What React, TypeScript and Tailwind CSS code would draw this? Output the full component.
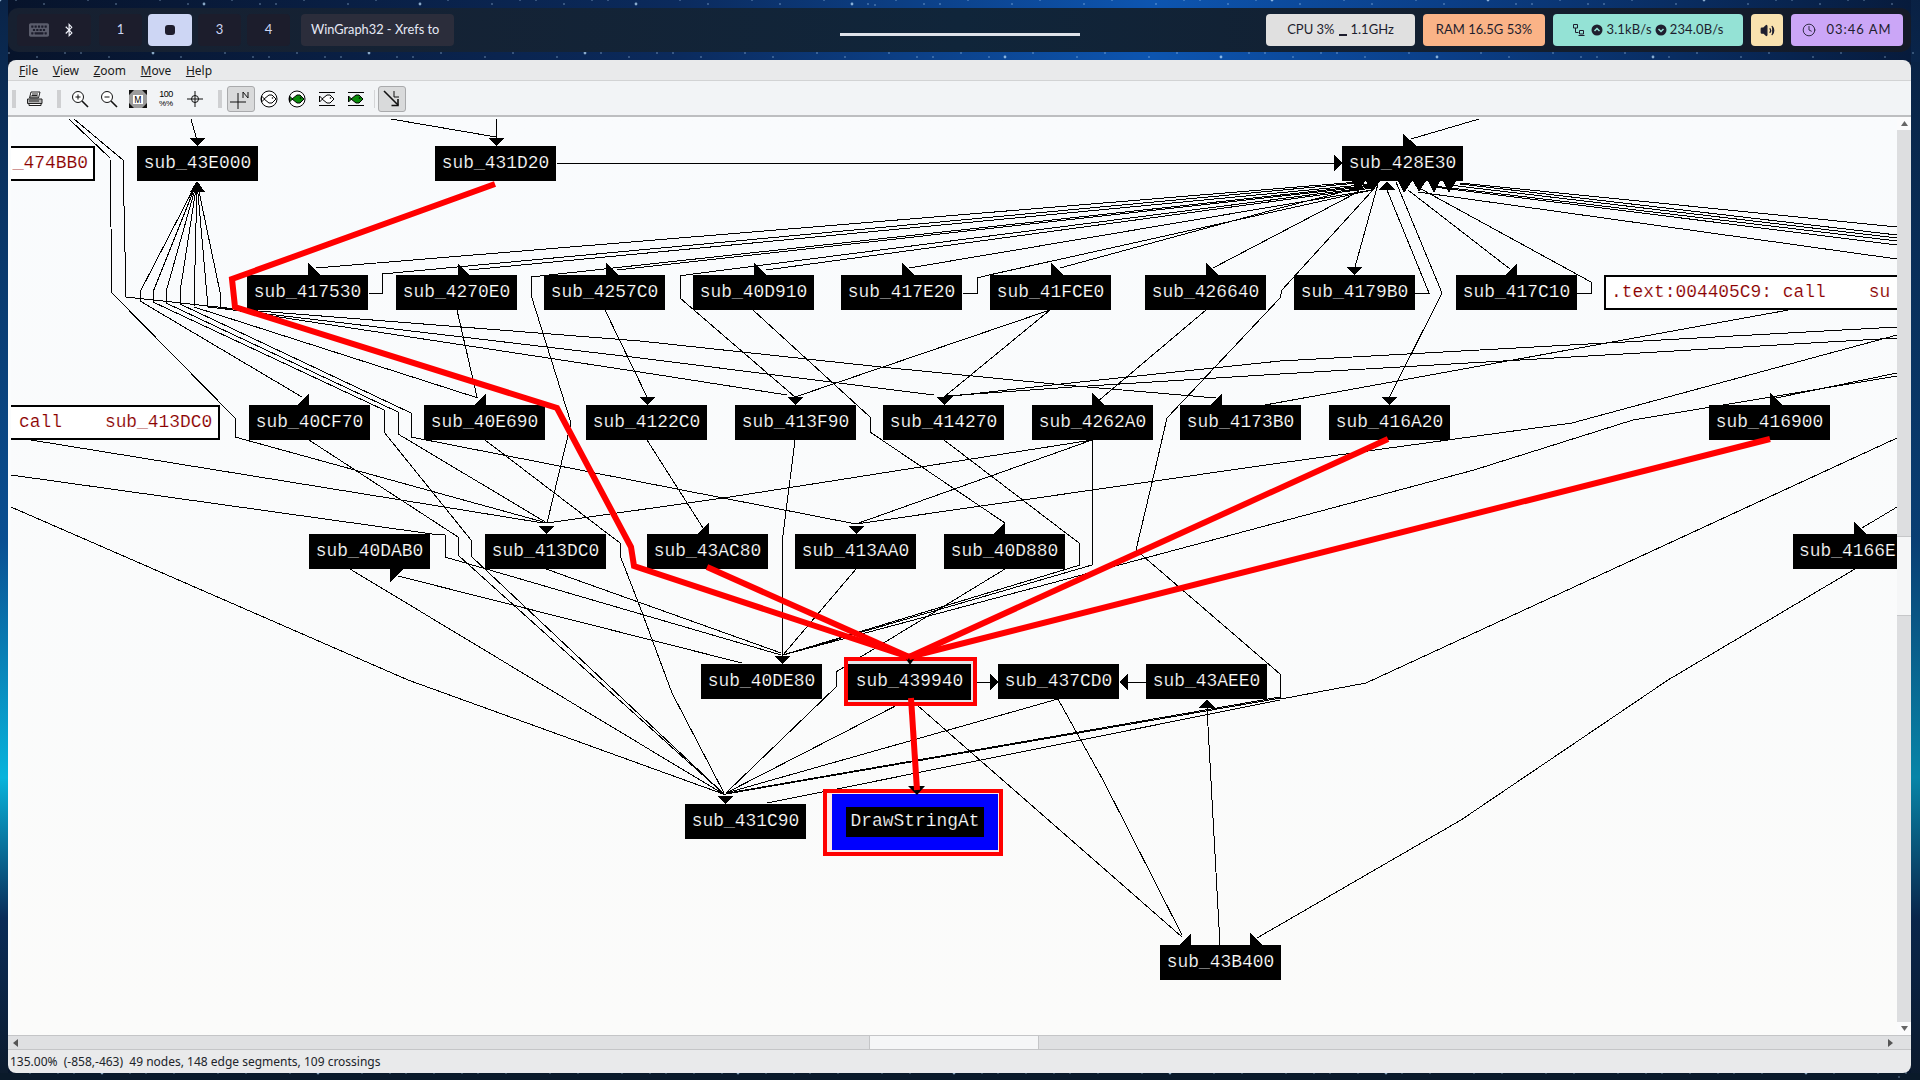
import React from "react";
import { FaBluetoothB, FaKeyboard } from "react-icons/fa";
import { Clock, Volume2 } from "lucide-react";

// Screen coordinates of the graph's top-left corner. Everything below is in screen px.
const OX = 11;
const OY = 119;

const nodes: [string, number, number][] = [
  ["sub_43E000", 137, 146], ["sub_431D20", 435, 146], ["sub_428E30", 1342, 146],
  ["sub_417530", 247, 275], ["sub_4270E0", 396, 275], ["sub_4257C0", 544, 275], ["sub_40D910", 693, 275],
  ["sub_417E20", 841, 275], ["sub_41FCE0", 990, 275], ["sub_426640", 1145, 275], ["sub_4179B0", 1294, 275],
  ["sub_417C10", 1456, 275],
  ["sub_40CF70", 249, 405], ["sub_40E690", 424, 405], ["sub_4122C0", 586, 405], ["sub_413F90", 735, 405],
  ["sub_414270", 883, 405], ["sub_4262A0", 1032, 405], ["sub_4173B0", 1180, 405], ["sub_416A20", 1329, 405],
  ["sub_416900", 1709, 405],
  ["sub_40DAB0", 309, 534], ["sub_413DC0", 485, 534], ["sub_43AC80", 647, 534], ["sub_413AA0", 795, 534],
  ["sub_40D880", 944, 534],
  ["sub_40DE80", 701, 664], ["sub_437CD0", 998, 664], ["sub_43AEE0", 1146, 664],
  ["sub_431C90", 685, 804], ["sub_43B400", 1160, 945],
];

const edges: string[] = [
  // top row
  "191,119 197,140",
  "496,119 496,140",
  "391,119 496,137",
  "557,163 1336,163",
  "1411,139 1479,119",
  // long routed edges on the left
  "69,119 110,158 111,227 112,293 235,418 235,437 547,523",
  "74,119 123,160 126,297 245,310 640,341 881,367 1064,385 1216,398",
  // fan out of sub_43E000
  "197,182 140,292 140,301 302,397",
  "197,182 153,292 153,302 384,410 384,432 471,540 472,557 725,795",
  "197,182 166,292 166,303 398,412 398,434 547,523",
  "197,182 180,292 180,304 411,413 411,437 856,524",
  "197,182 194,307 478,398",
  "197,182 208,307 640,358 934,395",
  "197,182 220,292 220,308 640,372 787,395",
  // bundle into sub_428E30 from the left
  "316,268 1358,182",
  "369,293 382,293 382,274 1358,183",
  "469,270 1372,184",
  "531,295 531,277 1372,185",
  "617,270 1372,186",
  "680,276 693,274 1372,187",
  "766,270 1372,188",
  "909,268 1372,190",
  "963,293 977,293 977,278 989,275 1372,190",
  "1060,268 1280,208 1358,188",
  "1213,268 1358,192",
  "1372,191 1282,290 1280,298 1167,418 1155,470 1136,550 1280,674 1281,698 726,794",
  // bundle out of sub_428E30 to the right
  "1460,183 1897,227",
  "1460,184 1897,235",
  "1449,185 1897,238",
  "1434,186 1897,241",
  "1434,187 1897,245",
  "1418,192 1897,259",
  // around sub_428E30
  "1378,184 1355,267",
  "1415,293 1429,293 1387,190",
  "1396,182 1442,293 1389,398",
  "1408,190 1510,269",
  "1421,189 1591,282 1591,293 1577,293",
  // row 2 downwards
  "457,310 477,397",
  "531,295 571,423 547,523",
  "605,310 647,397",
  "680,276 680,298 795,397",
  "753,310 870,417 870,432 1005,523",
  "1050,310 795,397",
  "1050,310 944,397",
  "1206,310 1097,402",
  // from the right edge towards row 3
  "1280,361 1052,385 944,397",
  "1280,374 1072,387 946,396",
  "1280,361 1897,327",
  "1280,374 1897,338",
  "1265,405 1794,309",
  "856,524 1280,463 1572,423 1897,335",
  "783,655 1474,470 1633,420 1897,376",
  "1776,398 1897,373",
  // row 3 downwards
  "309,440 458,537 459,556 725,795",
  "485,440 620,543 621,558 640,607 672,693 724,793",
  "647,440 703,528",
  "795,440 782,543 782,657",
  "944,440 1079,543 1080,565 783,655",
  "1092,440 1092,565 783,655",
  "1092,440 856,524",
  "1092,440 730,497 547,523",
  "31,440 543,523",
  "11,475 432,534 445,535 445,557 781,655",
  "11,507 408,680 726,795",
  // row 4 downwards
  "350,569 725,795",
  "398,576 742,663",
  "546,569 781,653",
  "856,569 783,655",
  "1005,569 836,672 836,687 726,793",
  // bottom of the graph
  "909,699 726,793",
  "917,705 1182,937",
  "1058,699 1103,780 1182,935",
  "1058,699 726,793",
  "1280,697 728,793",
  "767,803 1280,700",
  "1281,699 1366,683 1897,438",
  "1207,708 1220,945",
  "1855,569 1668,680 1461,820 1257,938",
  "1862,528 1897,507",
  "971,682 990,682",
  "1146,682 1128,682",
];

const arrows: string[] = [
  // down
  "189,138 206,138 197,146", "488,138 505,138 496,146", "1346,267 1363,267 1354,275",
  "639,397 656,397 647,405", "787,397 804,397 795,405", "936,397 953,397 944,405", "1381,397 1398,397 1389,405",
  "538,526 555,526 546,534", "848,526 865,526 856,534", "774,656 790,656 782,664", "717,796 734,796 725,804",
  // up
  "197,181 190,192 205,192", "1387,181 1379,190 1395,190", "1207,699 1199,708 1215,708",
  // sideways
  "1334,155 1334,172 1342,163", "990,673 990,691 998,682", "1128,673 1128,691 1119,682",
  // the skewed heads that stick out of a node
  "1403,134 1403,146 1417,146", "308,263 308,275 320,275", "458,263 458,275 469,275", "606,263 606,275 618,275",
  "754,263 754,275 767,275", "902,263 902,275 914,275", "1051,263 1051,275 1063,275", "1206,263 1206,275 1219,275",
  "1517,263 1517,275 1505,275", "309,393 309,405 298,405", "486,393 486,405 474,405", "1092,393 1092,405 1104,405",
  "1222,393 1222,405 1210,405", "1770,393 1770,405 1782,405", "709,522 709,534 697,534", "1005,522 1005,534 994,534",
  "1854,522 1854,534 1866,534", "1191,933 1191,945 1179,945", "1250,933 1250,945 1262,945", "390,569 390,582 403,569",
  // the row under sub_428E30
  "1352,181 1365,181 1358,193", "1366,181 1380,181 1372,192", "1398,181 1412,181 1404,193",
  "1413,181 1426,181 1419,192", "1428,181 1440,181 1434,193", "1443,181 1456,181 1449,193",
];

const redEdges: string[] = [
  "495,184 232,279 235,307 557,408 631,547 634,566 909,657",
  "707,567 909,657",
  "1388,439 909,657",
  "1770,439 909,657",
  "911,698 917,790",
];

const stars = Array.from({ length: 260 }, (_, i) => ({
  x: (i * 397) % 1920,
  y: i % 4 === 0 ? (i * 31) % 8 : i % 4 === 1 ? 52 + (i * 13) % 8 : i % 4 === 2 ? 1073 + (i * 7) % 7 : (i * 211) % 1080,
  r: i % 9 === 0 ? 1.4 : 0.7,
}));

const pos = (x: number, y: number) => ({ left: x - OX, top: y - OY });

const nodeText =
  "font-['Liberation_Mono',monospace] text-[17.9px] leading-none text-white [-webkit-text-stroke:0.2px_#000]";
const commentText =
  "font-['Liberation_Mono',monospace] text-[17.9px] leading-none text-[#8b0000] [-webkit-text-stroke:0.15px_#fff]";

function GraphNode({ label, x, y }: { label: string; x: number; y: number }) {
  return (
    <div style={pos(x, y)} className={`absolute flex h-[35px] w-[121px] items-center justify-center bg-black ${nodeText}`}>
      {label}
    </div>
  );
}

function Grip({ className = "" }: { className?: string }) {
  return <div className={`h-[18px] w-[4px] bg-[radial-gradient(#cfd0d2_1px,transparent_1px)] bg-[length:2px_3px] ${className}`} />;
}

function Tool({ children, pressed, className = "" }: { children: React.ReactNode; pressed?: boolean; className?: string }) {
  return (
    <div
      className={`flex h-[26px] w-[28px] shrink-0 items-center justify-center rounded-[3px] border ${
        pressed ? "border-[#a9aaac] bg-[#d9dadb]" : "border-transparent"
      } ${className}`}
    >
      {children}
    </div>
  );
}

function Zoomer({ plus }: { plus?: boolean }) {
  return (
    <svg width="20" height="20" viewBox="0 0 20 20" fill="none" stroke="#111" strokeWidth="1">
      <circle cx="8" cy="8" r="5.5" fill="#fff" />
      <path d="M5.5 8h5" />
      {plus && <path d="M8 5.5v5" />}
      <path d="M12 12l6 6" strokeWidth="1.6" />
    </svg>
  );
}

function Fish({ green, ring }: { green?: boolean; ring?: boolean }) {
  const fill = green ? "#0a8a0a" : "#fff";
  return (
    <svg width="18" height="18" viewBox="0 0 18 18" fill="none" stroke="#000" strokeWidth="1">
      {ring ? <circle cx="9" cy="9" r="8" fill="#fff" /> : <path d="M1 2.5h16M1 15.5h16" />}
      <path d="M1.5 6 L4.5 9 L1.5 12 Z" fill={fill} />
      <path d="M4 9 L9 5 H12 L16 9 L12 13 H9 Z" fill={fill} />
      <circle cx="12.5" cy="8" r="0.8" fill="#000" stroke="none" />
    </svg>
  );
}

function Tick({ children }: { children: React.ReactNode }) {
  return <div className="flex h-[13px] w-[14px] shrink-0 items-center justify-center bg-[#fbfbfc]">{children}</div>;
}

function Chip({ children, className = "" }: { children: React.ReactNode; className?: string }) {
  return (
    <div className={`flex h-[32px] items-center justify-center rounded-[4px] font-['Lato',sans-serif] text-[13px] text-[#1e1e2e] ${className}`}>
      {children}
    </div>
  );
}

function Rate({ up }: { up?: boolean }) {
  return (
    <svg width="12" height="12" viewBox="0 0 12 12" className="shrink-0">
      <circle cx="6" cy="6" r="5.5" fill="#1e1e2e" />
      <path d={up ? "M3.5 7L6 4.5 8.5 7" : "M3.5 5L6 7.5 8.5 5"} fill="none" stroke="#94e2d5" strokeWidth="1.5" />
    </svg>
  );
}

export default function App() {
  return (
    <div className="relative flex h-[1080px] w-[1920px] flex-col overflow-hidden bg-[#08162c] pt-2 pl-2 pr-[9px] pb-[7px]">
      {/* wallpaper */}
      <svg className="absolute inset-0" width="1920" height="1080">
        <defs>
          <linearGradient id="wpTop" x1="0" x2="1" y1="0" y2="0">
            <stop offset="0" stopColor="#07132a" />
            <stop offset="0.35" stopColor="#0b2a5c" />
            <stop offset="0.6" stopColor="#0d55b0" />
            <stop offset="0.75" stopColor="#0b3f88" />
            <stop offset="1" stopColor="#071a3a" />
          </linearGradient>
          <linearGradient id="wpLeft" x1="0" x2="0" y1="0" y2="1">
            <stop offset="0" stopColor="#0a2448" />
            <stop offset="0.5" stopColor="#0a4f92" />
            <stop offset="0.72" stopColor="#08b4dc" />
            <stop offset="0.85" stopColor="#0a2c58" />
            <stop offset="1" stopColor="#0d1b2c" />
          </linearGradient>
        </defs>
        <rect width="1920" height="62" fill="url(#wpTop)" />
        <rect width="8" height="1080" fill="url(#wpLeft)" />
        <rect x="1911" width="9" height="1080" fill="url(#wpLeft)" opacity="0.7" />
        <rect y="1073" width="1920" height="7" fill="#0a1a2a" />
        {stars.map((s, i) => (
          <circle key={i} cx={s.x} cy={s.y} r={s.r} fill="#bfe2ff" opacity="0.7" />
        ))}
      </svg>

      {/* top bar */}
      <header className="relative flex h-[44px] shrink-0 items-center rounded-[10px] bg-gradient-to-r from-[#172030] via-[#10253a] to-[#141a28] pl-[9px] pr-[8px]">
        <div className="flex h-[32px] w-[74px] items-center gap-[13px] rounded-[4px] bg-[#1c1d2c] pl-[12px]">
          <FaKeyboard size={20} color="#5b5d6c" />
          <FaBluetoothB size={14} color="#f0f2fa" />
        </div>
        <div className="ml-2 flex gap-[6px] font-['Lato',sans-serif] text-[13px] text-[#cdd6f4]">
          <div className="flex h-[32px] w-[43px] items-center justify-center rounded-[4px] bg-[#1c1d2c]">1</div>
          <div className="flex h-[32px] w-[44px] items-center justify-center rounded-[4px] bg-[#cdd6f4]">
            <div className="h-[10px] w-[10px] rounded-[3px] bg-[#1e1e2e]" />
          </div>
          <div className="flex h-[32px] w-[43px] items-center justify-center rounded-[4px] bg-[#1c1d2c]">3</div>
          <div className="flex h-[32px] w-[43px] items-center justify-center rounded-[4px] bg-[#1c1d2c]">4</div>
        </div>
        <div className="ml-[11px] flex h-[32px] w-[153px] items-center rounded-[4px] bg-[#2b2d3b] pl-[10px] font-['Lato',sans-serif] text-[12.8px] text-[#e6e9f5]">
          WinGraph32 - Xrefs to
        </div>
        <div className="ml-[386px] mt-[8px] h-[3px] w-[240px] bg-[#dfe3ea]" />
        <div className="ml-auto flex gap-2">
          <Chip className="w-[149px] gap-[4px] bg-[#e0e0e0]">
            <span>CPU 3%</span>
            <span className="mt-[9px] h-[2px] w-[8px] bg-[#1e1e2e]" />
            <span>1.1GHz</span>
          </Chip>
          <Chip className="w-[122px] bg-[#fab387]">RAM 16.5G 53%</Chip>
          <Chip className="w-[190px] gap-[3px] bg-[#94e2d5] tracking-[0.15px]">
            <svg width="13" height="14" viewBox="0 0 13 14" fill="none" stroke="#1e1e2e" className="mr-[3px] shrink-0">
              <path d="M1.5 1.5h4v3.5h-4zM3.5 5v4.5h3M7.5 7.5h4v3.5h-4zM6.5 12.5h6" />
            </svg>
            <Rate up />
            <span>3.1kB/s</span>
            <Rate />
            <span>234.0B/s</span>
          </Chip>
          <Chip className="w-[32px] bg-[#f9e2af]">
            <Volume2 size={15} strokeWidth={2} fill="#1e1e2e" />
          </Chip>
          <Chip className="w-[112px] gap-[10px] bg-[#cba6f7] tracking-[1px]">
            <Clock size={14} strokeWidth={1.5} />
            <span>03:46 AM</span>
          </Chip>
        </div>
      </header>

      {/* window */}
      <main className="relative mt-2 flex min-h-0 flex-1 flex-col overflow-hidden rounded-[8px] bg-[#e9eaeb] font-['Noto_Sans',sans-serif] text-[12px] text-[#1a1a1a]">
        <nav className="flex h-[21px] shrink-0 items-center gap-[14.5px] border-b border-[#d2d3d4] pl-[11px] pt-px">
          <span><u>F</u>ile</span>
          <span><u>V</u>iew</span>
          <span><u>Z</u>oom</span>
          <span><u>M</u>ove</span>
          <span><u>H</u>elp</span>
        </nav>

        <div className="flex h-[34px] shrink-0 items-center bg-[#f2f4f6] pl-1 pt-[2px]">
          <Grip />
          <Tool className="ml-[5px]">
            <svg width="18" height="18" viewBox="0 0 18 18" stroke="#222" fill="#fff" strokeWidth="1">
              <path d="M5 2h9l-1.5 6h-9z" />
              <path d="M1.5 9h14.5v4.5H1.5z" fill="#b4b4b4" />
              <path d="M3 13.5h12v2H3z" />
              <path d="M4 7h8M6 4h6M5.5 5.5h6M3 11h10" fill="none" />
            </svg>
          </Tool>
          <Grip className="ml-[8px]" />
          <Tool className="ml-[5px]"><Zoomer plus /></Tool>
          <Tool className="ml-[1px]"><Zoomer /></Tool>
          <Tool className="ml-[1px]">
            <div className="relative flex h-[18px] w-[18px] items-center justify-center bg-[#9c9c9c]">
              <span className="bg-white px-px text-[8px] leading-[9px] text-black">M</span>
              <svg className="absolute inset-0" width="18" height="18" viewBox="0 0 18 18" fill="#111">
                <path d="M0 0h5L0 5zM18 0v5l-5-5zM0 18v-5l5 5zM18 18h-5l5-5z" />
              </svg>
            </div>
          </Tool>
          <Tool>
            <div className="flex flex-col items-center text-[9px] leading-[9px] text-black">
              <span className="font-['Liberation_Sans',sans-serif] tracking-[-0.5px]">100</span>
              <span className="font-['Liberation_Sans',sans-serif] text-[8px]">%%</span>
            </div>
          </Tool>
          <Tool className="ml-[1px]">
            <svg width="16" height="16" viewBox="0 0 16 16" fill="none" stroke="#111">
              <circle cx="8" cy="8" r="3.5" />
              <path d="M0 8h16M8 0v16" />
            </svg>
          </Tool>
          <Grip className="ml-[9px]" />
          <Tool pressed className="ml-[5px]">
            <svg width="22" height="20" viewBox="0 0 22 20" fill="none" stroke="#111">
              <path d="M0 13h16M8 4v16" />
              <path d="M13 9V3l5 6V3" strokeWidth="1" />
            </svg>
          </Tool>
          <Tool><Fish ring /></Tool>
          <Tool><Fish ring green /></Tool>
          <Tool className="ml-[2px]"><Fish /></Tool>
          <Tool className="ml-[1px]"><Fish green /></Tool>
          <div className="ml-[4px] h-[18px] w-px bg-[#d4d5d7]" />
          <Tool pressed className="ml-[3px]">
            <svg width="20" height="20" viewBox="0 0 20 20" fill="none" stroke="#111">
              <path d="M2 2l14 14" strokeWidth="1.6" />
              <path d="M16 10v6.5h-6.5" strokeWidth="1.6" />
              <path d="M12 2v6h5" />
            </svg>
          </Tool>
        </div>

        <div className="flex min-h-0 flex-1 border-t-2 border-[#bdbec0]">
          <section className="relative min-w-0 flex-1 overflow-hidden border-t-2 border-l-[3px] border-[#fafcfd] bg-gradient-to-b from-[#f9fbfd] to-[#fbfbfa]">
            <svg className="absolute top-0 left-0" width="1886" height="916" viewBox="11 119 1886 916" fill="none" stroke="#000" shapeRendering="crispEdges">
              {edges.map((p, i) => (
                <polyline key={i} points={p} />
              ))}
              {arrows.map((p, i) => (
                <polygon key={i} points={p} fill="#000" stroke="none" />
              ))}
            </svg>

            {nodes.map(([label, x, y]) => (
              <GraphNode key={label} label={label} x={x} y={y} />
            ))}

            {/* these three are cut off by the view in the original */}
            <div style={pos(1793, 534)} className={`absolute flex h-[35px] w-[104px] items-center bg-black pl-[6px] ${nodeText}`}>
              sub_4166E
            </div>
            <div style={pos(11, 146)} className={`absolute flex h-[35px] w-[84px] items-center justify-end border-y-2 border-r-2 border-black bg-white pr-[5px] ${commentText}`}>
              _474BB0
            </div>
            <div style={pos(11, 405)} className={`absolute flex h-[35px] w-[209px] items-center whitespace-pre border-y-2 border-r-2 border-black bg-white pl-[8px] ${commentText}`}>
              call    sub_413DC0
            </div>
            <div style={pos(1604, 275)} className={`absolute flex h-[35px] w-[293px] items-center whitespace-pre border-y-2 border-l-2 border-black bg-white pl-[5px] ${commentText}`}>
              .text:004405C9: call    su
            </div>

            <div style={pos(844, 657)} className={`absolute h-[49px] w-[133px] border-4 border-[#ff0000] bg-[#e4e5ea] pt-[3px] ${nodeText}`}>
              <div className="flex h-[36px] w-[123px] items-center justify-center bg-black">sub_439940</div>
            </div>

            <div style={pos(823, 789)} className="absolute h-[67px] w-[180px] border-4 border-[#ff0000] bg-[#ffe8e8] pt-px pr-px pb-[2px] pl-[5px]">
              <div className="flex h-full w-full items-center justify-center bg-[#0000ff]">
                <div className={`flex h-[30px] w-[138px] items-center justify-center bg-black ${nodeText}`}>DrawStringAt</div>
              </div>
            </div>

            <svg className="absolute top-0 left-0" width="1886" height="916" viewBox="11 119 1886 916" fill="none">
              <polygon points="904,656 916,656 910,665" fill="#000" />
              <polygon points="908,786 925,786 917,795" fill="#000" />
              {redEdges.map((p, i) => (
                <polyline key={i} points={p} stroke="#ff0000" strokeWidth="6" strokeLinejoin="miter" />
              ))}
            </svg>
          </section>

          <aside className="flex w-[14px] shrink-0 flex-col justify-between bg-[#dddee0]">
            <Tick>
              <svg width="7" height="5" viewBox="0 0 7 5" fill="#666"><path d="M3.5 0L7 5H0z" /></svg>
            </Tick>
            <div className="mt-[406px] h-[80px] shrink-0 border-y border-[#c6c7c9] bg-[#f5f6f7]" />
            <div className="flex-1" />
            <Tick>
              <svg width="7" height="5" viewBox="0 0 7 5" fill="#666"><path d="M0 0h7L3.5 5z" /></svg>
            </Tick>
          </aside>
        </div>

        <div className="flex h-[15px] shrink-0 items-center border-y border-[#c4c5c7] bg-[#dfe0e2]">
          <div className="flex h-[13px] w-[14px] items-center justify-center">
            <svg width="5" height="8" viewBox="0 0 5 8" fill="#555"><path d="M5 0v8L0 4z" /></svg>
          </div>
          <div className="ml-[847px] h-[13px] w-[170px] border-x border-[#c4c5c7] bg-[#f5f6f7]" />
          <div className="flex-1" />
          <div className="mr-[14px] flex h-[13px] w-[14px] items-center justify-center">
            <svg width="5" height="8" viewBox="0 0 5 8" fill="#555"><path d="M0 0v8l5-4z" /></svg>
          </div>
        </div>

        <footer className="flex h-[23px] shrink-0 items-center whitespace-pre pl-[2px] text-[#20242a]">
          135.00%  (-858,-463)  49 nodes, 148 edge segments, 109 crossings
        </footer>
      </main>
    </div>
  );
}
